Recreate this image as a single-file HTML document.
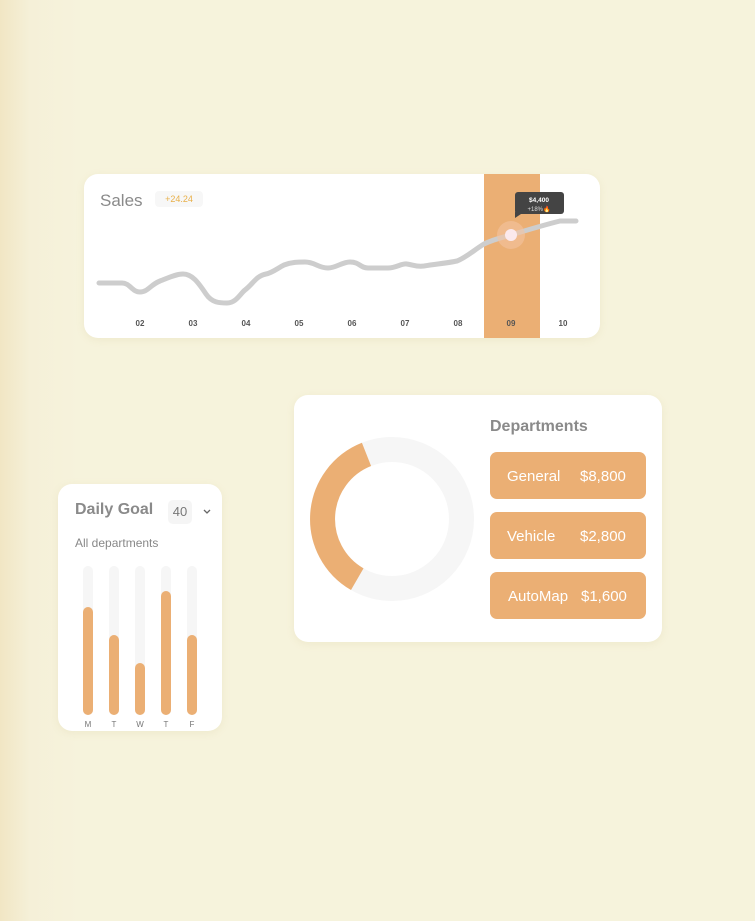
<!DOCTYPE html>
<html><head><meta charset="utf-8"><style>
*{margin:0;padding:0;box-sizing:border-box}
body{width:755px;height:921px;overflow:hidden;font-family:"Liberation Sans",sans-serif;background:linear-gradient(90deg,#f1e6c4 0,#f5f0d8 30px,#f6f3dc 80px,#f6f3dc 100%);position:relative}
.card{position:absolute;background:#fff;border-radius:14px;box-shadow:0 2px 8px rgba(200,180,120,.15)}
.t{position:absolute;white-space:nowrap}
.btn{position:absolute;left:196px;width:156px;height:47px;background:#ebaf74;border-radius:7px;color:#fff;font-size:15px}
.btn span{position:absolute;top:16px}
</style></head><body>
<div class="card" style="left:84px;top:174px;width:516px;height:164px;overflow:hidden">
 <div style="position:absolute;left:400px;top:0;width:56px;height:164px;background:#ebaf74"></div>
 <div class="t" style="left:16px;top:17px;font-size:17px;color:#8a8a8a">Sales</div>
 <div class="t" style="left:71px;top:17px;width:48px;height:16px;background:#f7f7f7;border-radius:4px;font-size:9px;color:#e8b04a;text-align:center;line-height:16px">+24.24</div>
 <svg style="position:absolute;left:0;top:0" width="516" height="164">
  <path d="M15,109 L38,109 C46,109 48,118 56,118 C64,118 66,111 76,107 C84,104 92,100 99,100 C108,100 114,108 122,120 C128,129 136,129 143,129 C152,129 156,120 161,116 C169,110 172,102 182,100 C188,99 194,94 200,91 C208,88 214,88 221,88 C231,88 234,94 244,94 C252,94 258,88 266,88 C276,88 276,94 284,94 L304,94 C312,94 318,89 323,90 C330,91 332,93 340,92 C352,90 364,89 373,87 C383,83 390,76 400,70 C410,65 420,63 427,61 C440,57 460,51 476,47 L492,47" fill="none" stroke="#cdcdcd" stroke-width="5" stroke-linecap="round"/>
  <circle cx="427" cy="61" r="14" fill="#f3c3a0" opacity=".6"/>
  <circle cx="427" cy="61" r="6" fill="#fbe9ec"/>
  <rect x="431" y="18" width="49" height="22" rx="3" fill="#444"/>
  <path d="M431,38 L431,44 L437,40 Z" fill="#444"/>
  <text x="455" y="28" font-size="6.5" fill="#fff" text-anchor="middle" font-weight="bold" font-family="Liberation Sans">$4,400</text>
  <text x="455" y="37" font-size="6" fill="#ddd" text-anchor="middle" font-family="Liberation Sans">+18%🔥</text>
  <g font-size="8" fill="#555" font-weight="bold" font-family="Liberation Sans" text-anchor="middle">
   <text x="56" y="152">02</text><text x="109" y="152">03</text><text x="162" y="152">04</text><text x="215" y="152">05</text><text x="268" y="152">06</text><text x="321" y="152">07</text><text x="374" y="152">08</text><text x="427" y="152">09</text><text x="479" y="152">10</text>
  </g>
 </svg>
</div>
<div class="card" style="left:294px;top:395px;width:368px;height:247px">
 <svg style="position:absolute;left:0;top:0" width="368" height="247">
  <circle cx="98" cy="124" r="69.5" fill="none" stroke="#f6f6f6" stroke-width="25"/>
  <path d="M63.25,184.2 A69.5,69.5 0 0 1 72.5,59.4" fill="none" stroke="#ebaf74" stroke-width="25"/>
 </svg>
 <div class="t" style="left:196px;top:23px;font-size:16px;font-weight:bold;color:#8a8a8a">Departments</div>
 <div class="btn" style="top:57px"><span style="left:17px">General</span><span style="left:90px">$8,800</span></div>
 <div class="btn" style="top:117px"><span style="left:17px">Vehicle</span><span style="left:90px">$2,800</span></div>
 <div class="btn" style="top:177px"><span style="left:18px">AutoMap</span><span style="left:91px">$1,600</span></div>
</div>
<div class="card" style="left:58px;top:484px;width:164px;height:247px">
 <div class="t" style="left:17px;top:17px;font-size:16px;font-weight:bold;color:#8a8a8a">Daily Goal</div>
 <div class="t" style="left:110px;top:16px;width:24px;height:24px;background:#f5f5f5;border-radius:5px;font-size:13px;color:#777;text-align:center;line-height:24px">40</div>
 <svg style="position:absolute;left:145px;top:25px" width="8" height="6"><path d="M1,1 L4,4 L7,1" fill="none" stroke="#666" stroke-width="1.3"/></svg>
 <div class="t" style="left:17px;top:52px;font-size:12px;color:#888">All departments</div>
 <svg style="position:absolute;left:0;top:0" width="164" height="247">
  <g stroke-width="10" stroke-linecap="round">
   <line x1="30" y1="87" x2="30" y2="226" stroke="#f6f6f6"/><line x1="30" y1="128" x2="30" y2="226" stroke="#ebaf74"/>
   <line x1="56" y1="87" x2="56" y2="226" stroke="#f6f6f6"/><line x1="56" y1="156" x2="56" y2="226" stroke="#ebaf74"/>
   <line x1="82" y1="87" x2="82" y2="226" stroke="#f6f6f6"/><line x1="82" y1="184" x2="82" y2="226" stroke="#ebaf74"/>
   <line x1="108" y1="87" x2="108" y2="226" stroke="#f6f6f6"/><line x1="108" y1="112" x2="108" y2="226" stroke="#ebaf74"/>
   <line x1="134" y1="87" x2="134" y2="226" stroke="#f6f6f6"/><line x1="134" y1="156" x2="134" y2="226" stroke="#ebaf74"/>
  </g>
  <g font-size="8" fill="#777" text-anchor="middle" font-family="Liberation Sans">
   <text x="30" y="243">M</text><text x="56" y="243">T</text><text x="82" y="243">W</text><text x="108" y="243">T</text><text x="134" y="243">F</text>
  </g>
 </svg>
</div>
</body></html>
